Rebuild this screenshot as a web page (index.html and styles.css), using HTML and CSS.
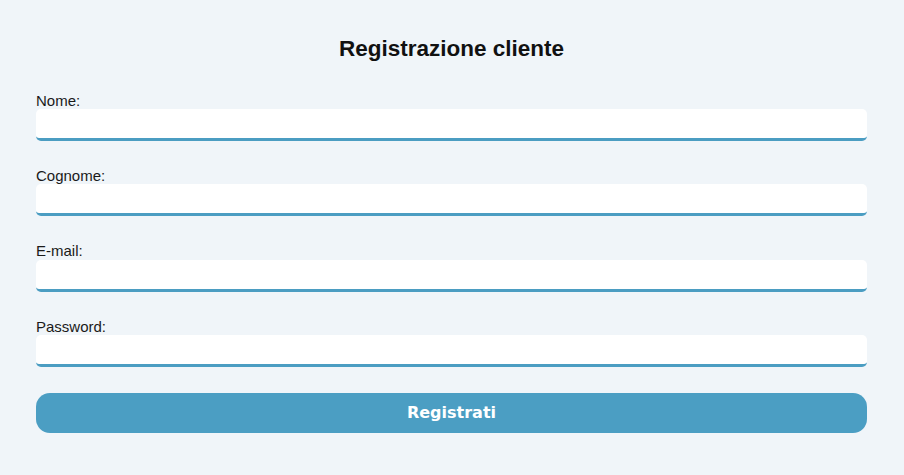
FILE: index.html
```html
<!DOCTYPE html>
<html lang="it">
<head>
<meta charset="utf-8">
<title>Registrazione cliente</title>
<link rel="stylesheet" href="styles.css">
</head>
<body>
<form class="form">
  <h2 class="title">Registrazione cliente</h2>
  <div class="field">
    <label class="label" for="nome">Nome:</label>
    <input class="input" id="nome" type="text">
  </div>
  <div class="field">
    <label class="label" for="cognome">Cognome:</label>
    <input class="input" id="cognome" type="text">
  </div>
  <div class="field">
    <label class="label" for="email">E-mail:</label>
    <input class="input" id="email" type="email">
  </div>
  <div class="field">
    <label class="label" for="password">Password:</label>
    <input class="input" id="password" type="password">
  </div>
  <button class="button" type="button">Registrati</button>
</form>
</body>
</html>
```
FILE: styles.css
```css
html, body {
  margin: 0;
  padding: 0;
  background: #f0f5f9;
}
body {
  font-family: "Liberation Sans", Arial, sans-serif;
  color: #111;
}
.form {
  padding: 37px 37px 36px 36px;
  display: flex;
  flex-direction: column;
}
.title {
  margin: 0 0 30.75px 0;
  font-size: 22.5px;
  line-height: 24px;
  font-weight: bold;
  text-align: center;
  color: #111;
}
.field {
  display: flex;
  flex-direction: column;
  margin-bottom: 26px;
}
.label {
  font-size: 15px;
  line-height: 17.25px;
  color: #1a1a1a;
}
.input {
  box-sizing: border-box;
  height: 32px;
  width: 100%;
  margin: 0;
  border: none;
  border-bottom: 3px solid #4b9dc2;
  border-radius: 5px;
  background: #fff;
  outline: none;
}
.button {
  box-sizing: border-box;
  height: 40px;
  width: 100%;
  margin: 0;
  border: none;
  border-radius: 14px;
  background: #4b9ec3;
  color: #fff;
  font-family: "DejaVu Sans", Verdana, sans-serif;
  font-weight: bold;
  font-size: 16px;
}
```
